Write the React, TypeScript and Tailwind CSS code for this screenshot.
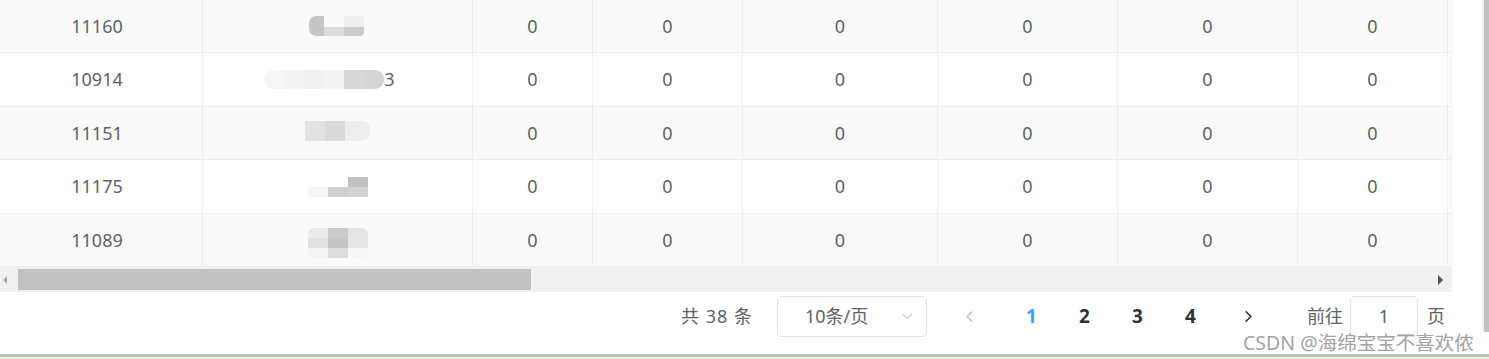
import { ChevronDown, ChevronLeft, ChevronRight } from 'lucide-react'

const cols = [203, 270, 120, 150, 195, 180, 180, 150, 4]

const rows = [
  { id: '11160', h: 53, striped: true, mosaic: 'a' },
  { id: '10914', h: 54, striped: false, mosaic: 'b' },
  { id: '11151', h: 53, striped: true, mosaic: 'c' },
  { id: '11175', h: 54, striped: false, mosaic: 'd' },
  { id: '11089', h: 53, striped: true, mosaic: 'e' },
]

// 打码的名字列，用灰色色块拼出来
function Mosaic({ kind }: { kind: string }) {
  if (kind === 'a') {
    return (
      <div className="flex items-end gap-0 ml-[-2px]">
        <div className="w-[15px] h-[20px] bg-[#c6c6c6] rounded-l-[7px]" />
        <div className="w-[20px] h-[9px] bg-[#dcdcdc]" />
        <div className="flex flex-col">
          <div className="w-[20px] h-[11px] bg-[#eeeeee]" />
          <div className="w-[20px] h-[9px] bg-[#cbcbcb] rounded-br-[4px]" />
        </div>
      </div>
    )
  }
  if (kind === 'b') {
    return (
      <div className="flex items-center ml-[-16px]">
        <div className="flex h-[19px] rounded-[9px] overflow-hidden">
          <div className="w-[20px] bg-[#f6f6f6]" />
          <div className="w-[20px] bg-[#f2f2f2]" />
          <div className="w-[20px] bg-[#f0f0f0]" />
          <div className="w-[20px] bg-[#f3f3f3]" />
          <div className="w-[20px] bg-[#d8d8d8]" />
          <div className="w-[20px] bg-[#d4d4d4]" />
        </div>
        <span>3</span>
      </div>
    )
  }
  if (kind === 'c') {
    return (
      <div className="flex mt-[-4px] h-[20px] rounded-r-[8px] overflow-hidden">
        <div className="w-[20px] bg-[#e2e2e2]" />
        <div className="w-[20px] bg-[#dadada]" />
        <div className="w-[25px] bg-[#eeeeee]" />
      </div>
    )
  }
  if (kind === 'd') {
    return (
      <div className="flex items-end">
        <div className="w-[20px] h-[10px] bg-[#f6f6f6]" />
        <div className="w-[20px] h-[10px] bg-[#cfcfcf]" />
        <div className="flex flex-col">
          <div className="w-[20px] h-[10px] bg-[#c2c2c2]" />
          <div className="w-[20px] h-[10px] bg-[#d4d4d4]" />
        </div>
      </div>
    )
  }
  return (
    <div className="grid grid-cols-[20px_20px_20px] grid-rows-[10px_10px_10px] mt-[6px]">
      <div className="bg-[#ebebeb] rounded-tl-[6px]" />
      <div className="bg-[#cacaca]" />
      <div className="bg-[#e4e4e4] rounded-tr-[6px]" />
      <div className="bg-[#e2e2e2]" />
      <div className="bg-[#c6c6c6]" />
      <div className="bg-[#e6e6e6]" />
      <div className="bg-[#f4f4f4] rounded-bl-[6px]" />
      <div className="bg-[#dedede]" />
      <div className="bg-[#f6f6f6] rounded-br-[6px]" />
    </div>
  )
}

export default function App() {
  return (
    <div
      className="relative w-[1489px] h-[359px] overflow-hidden bg-white text-[#606266]"
      style={{ fontFamily: '"Noto Sans", "Noto Sans CJK SC", sans-serif' }}
    >
      <div className="w-[1452px]">
        {/* 表格行 */}
        {rows.map((r) => (
          <div
            key={r.id}
            className={`grid grid-cols-[203px_270px_120px_150px_195px_180px_180px_150px_4px] ${
              r.striped ? 'bg-[#fafafa]' : 'bg-white'
            }`}
            style={{ height: r.h }}
          >
            {cols.map((_, i) => (
              <div
                key={i}
                className={`flex items-center justify-center border-r border-b border-[#ebeef5] text-[18px] ${
                  i === 0 ? 'pr-[8px]' : ''
                }`}
              >
                {i === 0 ? r.id : i === 1 ? <Mosaic kind={r.mosaic} /> : i === 8 ? null : '0'}
              </div>
            ))}
          </div>
        ))}

        {/* 横向滚动条 */}
        <div className="flex items-center h-[25px] bg-[#f1f1f1]">
          <div className="w-[18px] flex items-center justify-start pl-[3px]">
            <div className="w-0 h-0 border-y-[4px] border-y-transparent border-r-[4px] border-r-[#a3a3a3]" />
          </div>
          <div className="w-[513px] h-[21px] bg-[#c1c1c1]" />
          <div className="flex-1 flex justify-end pr-[9px]">
            <div className="w-0 h-0 border-y-[5px] border-y-transparent border-l-[5px] border-l-[#505050]" />
          </div>
        </div>
      </div>

      {/* 分页 */}
      <div className="flex items-center justify-end h-[41px] mt-[4px] pr-[44px] text-[18px]">
        <span className="mr-[24px] tracking-[1px]">共 38 条</span>
        <div className="flex items-center w-[150px] h-[41px] border border-[#dcdfe6] rounded-[5px] pl-[27px] pr-[10px]">
          <span className="flex-1 text-[#606266]">10条/页</span>
          <ChevronDown className="w-[17px] h-[17px] text-[#c0c4cc]" strokeWidth={1.5} />
        </div>
        <div className="flex items-center ml-[18px]">
          <div className="w-[48px] flex justify-center">
            <ChevronLeft className="w-[19px] h-[19px] text-[#c0c4cc]" strokeWidth={2} />
          </div>
          <div className="w-[12px]" />
          {[1, 2, 3, 4].map((n) => (
            <div
              key={n}
              className={`w-[53px] text-center font-bold text-[19px] ${
                n === 1 ? 'text-[#409eff]' : 'text-[#303133]'
              }`}
            >
              {n}
            </div>
          ))}
          <div className="w-[7px]" />
          <div className="w-[48px] flex justify-center">
            <ChevronRight className="w-[19px] h-[19px] text-[#303133]" strokeWidth={2} />
          </div>
        </div>
        <span className="ml-[35px] mr-[7px]">前往</span>
        <div className="flex items-center justify-center w-[68px] h-[41px] border border-[#dcdfe6] rounded-[5px]">
          1
        </div>
        <span className="ml-[9px]">页</span>
      </div>

      {/* 纵向滚动条 */}
      <div className="absolute top-0 right-0 w-[7px] h-[332px] bg-[#f1f1f1] flex justify-end">
        <div className="w-[5px] h-full bg-[#c1c1c1]" />
      </div>

      {/* 水印 */}
      <div className="absolute left-[1243px] top-[328px] text-[19.5px] text-[#a3a3a3] whitespace-nowrap">
        CSDN @海绵宝宝不喜欢侬
      </div>

      {/* 底部边线 */}
      <div className="absolute left-0 bottom-0 w-full h-[5px] border-t-[3px] border-[#bcc1b0] bg-[#eef5de]" />
    </div>
  )
}
